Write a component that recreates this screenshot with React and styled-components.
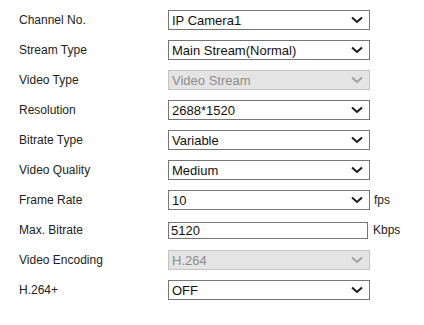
import React from "react";
import styled, { createGlobalStyle } from "styled-components";

const GlobalStyle = createGlobalStyle`
  body {
    margin: 0;
    background: #fff;
    font-family: Arial, "Liberation Sans", sans-serif;
  }
`;

const rows = [
  { label: "Channel No.", value: "IP Camera1" },
  { label: "Stream Type", value: "Main Stream(Normal)" },
  { label: "Video Type", value: "Video Stream", disabled: true },
  { label: "Resolution", value: "2688*1520" },
  { label: "Bitrate Type", value: "Variable" },
  { label: "Video Quality", value: "Medium" },
  { label: "Frame Rate", value: "10", unit: "fps" },
  { label: "Max. Bitrate", value: "5120", unit: "Kbps", input: true },
  { label: "Video Encoding", value: "H.264", disabled: true },
  { label: "H.264+", value: "OFF" },
];

const Chevron = ({ disabled }) => (
  <svg width="12" height="8" viewBox="0 0 12 8">
    <polyline
      points="1,1.5 6,6 11,1.5"
      fill="none"
      stroke={disabled ? "#a0a0a0" : "#1a1a1a"}
      strokeWidth="2"
    />
  </svg>
);

const App = () => {
  return (
    <>
      <GlobalStyle />
      <Form>
        {rows.map((r) => (
          <Row key={r.label}>
            <Label>{r.label}</Label>
            <Control>
              {r.input ? (
                <TextBox>{r.value}</TextBox>
              ) : (
                <SelectBox $disabled={r.disabled}>
                  <span>{r.value}</span>
                  <Chevron disabled={r.disabled} />
                </SelectBox>
              )}
              {r.unit && <Unit $input={r.input}>{r.unit}</Unit>}
            </Control>
          </Row>
        ))}
      </Form>
    </>
  );
};

export default App;

const Form = styled.div`
  padding: 10px 0 0 19px;
  display: flex;
  flex-direction: column;
  gap: 10px;
`;

const Row = styled.div`
  display: grid;
  grid-template-columns: 149px auto;
  align-items: center;
  height: 20px;
`;

const Label = styled.div`
  font-size: 12px;
  color: #222;
`;

const Control = styled.div`
  display: flex;
  align-items: center;
`;

const SelectBox = styled.div`
  box-sizing: border-box;
  width: 202px;
  height: 20px;
  display: flex;
  align-items: center;
  justify-content: space-between;
  padding: 0 6px 0 3px;
  font-size: 13px;
  border: 1px solid ${(p) => (p.$disabled ? "#c4c4c4" : "#767676")};
  background: ${(p) => (p.$disabled ? "#e4e4e4" : "#fff")};
  color: ${(p) => (p.$disabled ? "#8c8c8c" : "#111")};
`;

const TextBox = styled.div`
  box-sizing: border-box;
  width: 200px;
  height: 17px;
  display: flex;
  align-items: center;
  padding: 0 2px;
  font-size: 13px;
  color: #111;
  border: 1px solid #767676;
  background: #fff;
`;

const Unit = styled.span`
  font-size: 12px;
  color: #222;
  margin-left: ${(p) => (p.$input ? "5px" : "4px")};
`;
